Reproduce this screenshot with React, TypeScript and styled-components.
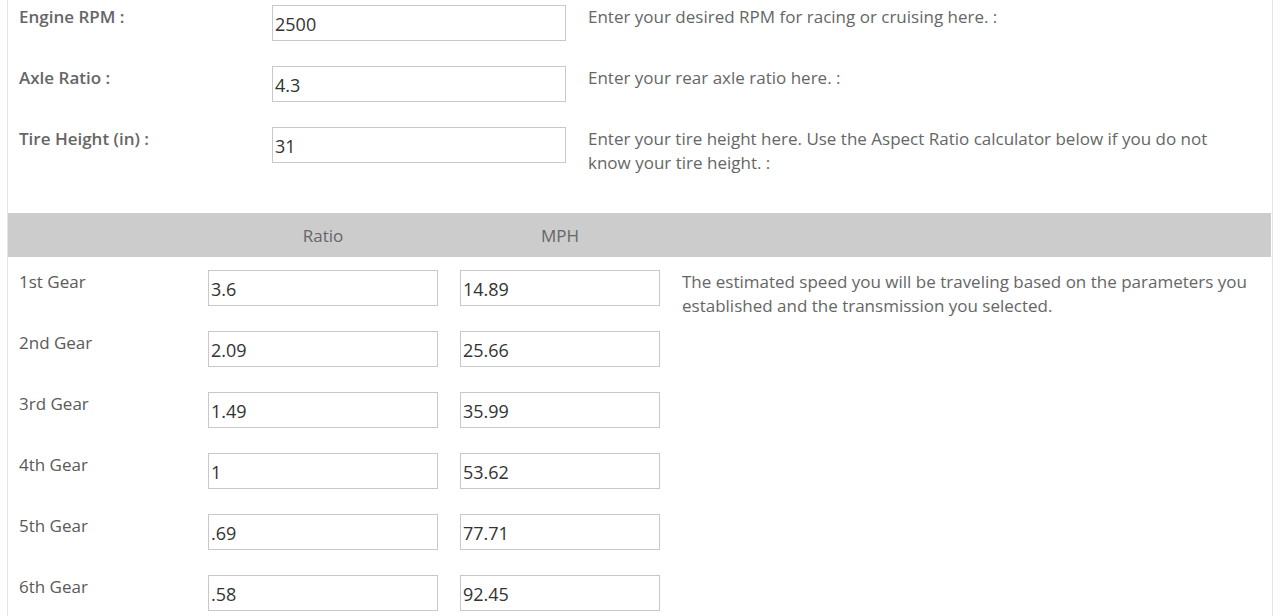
import styled, { createGlobalStyle } from 'styled-components'

const GlobalStyle = createGlobalStyle`
  html, body {
    margin: 0;
    padding: 0;
    background: #ffffff;
  }

  body {
    font-family: 'Open Sans', 'Liberation Sans', sans-serif;
    color: #5e5e5e;
  }
`

const Page = styled.div`
  padding: 0 7px;
  width: 1280px;
  box-sizing: border-box;
`

const Panel = styled.div`
  border-left: 1px solid #e4e4e4;
  border-right: 1px solid #e4e4e4;
  padding: 5px 1px 0 0;
`

const Settings = styled.div`
  display: grid;
  grid-template-columns: 253px 316px 1fr;
  row-gap: 25px;
  padding-bottom: 38px;
`

const Label = styled.div<{ $bold?: boolean }>`
  padding-left: 11px;
  font-size: 17px;
  line-height: 24px;
  font-weight: ${(p) => (p.$bold ? 600 : 400)};
  color: ${(p) => (p.$bold ? '#666' : '#5a5a5a')};
`

const Cell = styled.div`
  padding: 0 11px;
`

const Field = styled.input`
  display: block;
  width: 100%;
  height: 36px;
  box-sizing: border-box;
  margin: 0;
  padding: 1px 2px 0;
  border: 1px solid #c8c8c8;
  border-radius: 0;
  font-family: 'Open Sans', 'Liberation Sans', sans-serif;
  font-size: 18px;
  color: #333;
  background: #fff;
  outline: none;
`

const Hint = styled.div<{ $wide?: boolean }>`
  padding: 0 ${(p) => (p.$wide ? '10px' : '40px')} 0 11px;
  font-size: 17px;
  line-height: 24px;
  color: #666;
`

const GearTable = styled.div`
  display: grid;
  grid-template-columns: 189px 252px 222px 1fr;
`

const HeadRow = styled.div`
  grid-column: 1 / -1;
  display: grid;
  grid-template-columns: subgrid;
  height: 44px;
  align-items: center;
  background: #cccccc;
  margin-bottom: 13px;
`

const HeadCell = styled.div`
  text-align: center;
  font-size: 17px;
  color: #666;
`

const GearRow = styled.div`
  grid-column: 1 / -1;
  display: grid;
  grid-template-columns: subgrid;
  align-items: start;
  height: 61px;
`

const settings = [
  {
    label: 'Engine RPM :',
    value: '2500',
    hint: 'Enter your desired RPM for racing or cruising here. :',
  },
  {
    label: 'Axle Ratio :',
    value: '4.3',
    hint: 'Enter your rear axle ratio here. :',
  },
  {
    label: 'Tire Height (in) :',
    value: '31',
    hint: 'Enter your tire height here. Use the Aspect Ratio calculator below if you do not know your tire height. :',
  },
]

const gears = [
  { name: '1st Gear', ratio: '3.6', mph: '14.89' },
  { name: '2nd Gear', ratio: '2.09', mph: '25.66' },
  { name: '3rd Gear', ratio: '1.49', mph: '35.99' },
  { name: '4th Gear', ratio: '1', mph: '53.62' },
  { name: '5th Gear', ratio: '.69', mph: '77.71' },
  { name: '6th Gear', ratio: '.58', mph: '92.45' },
]

export default function App() {
  return (
    <Page>
      <GlobalStyle />
      <Panel>
        <Settings>
          {settings.map((s) => (
            <>
              <Label key={s.label + 'l'} $bold>
                {s.label}
              </Label>
              <Cell key={s.label + 'i'}>
                <Field defaultValue={s.value} />
              </Cell>
              <Hint key={s.label + 'h'}>{s.hint}</Hint>
            </>
          ))}
        </Settings>

        <GearTable>
          <HeadRow>
            <div />
            <HeadCell>Ratio</HeadCell>
            <HeadCell>MPH</HeadCell>
            <div />
          </HeadRow>
          {gears.map((g, i) => (
            <GearRow key={g.name}>
              <Label>{g.name}</Label>
              <Cell>
                <Field defaultValue={g.ratio} />
              </Cell>
              <Cell>
                <Field defaultValue={g.mph} />
              </Cell>
              {i === 0 ? (
                <Hint $wide>
                  The estimated speed you will be traveling based on the parameters you
                  established and the transmission you selected.
                </Hint>
              ) : (
                <div />
              )}
            </GearRow>
          ))}
        </GearTable>
      </Panel>
    </Page>
  )
}
